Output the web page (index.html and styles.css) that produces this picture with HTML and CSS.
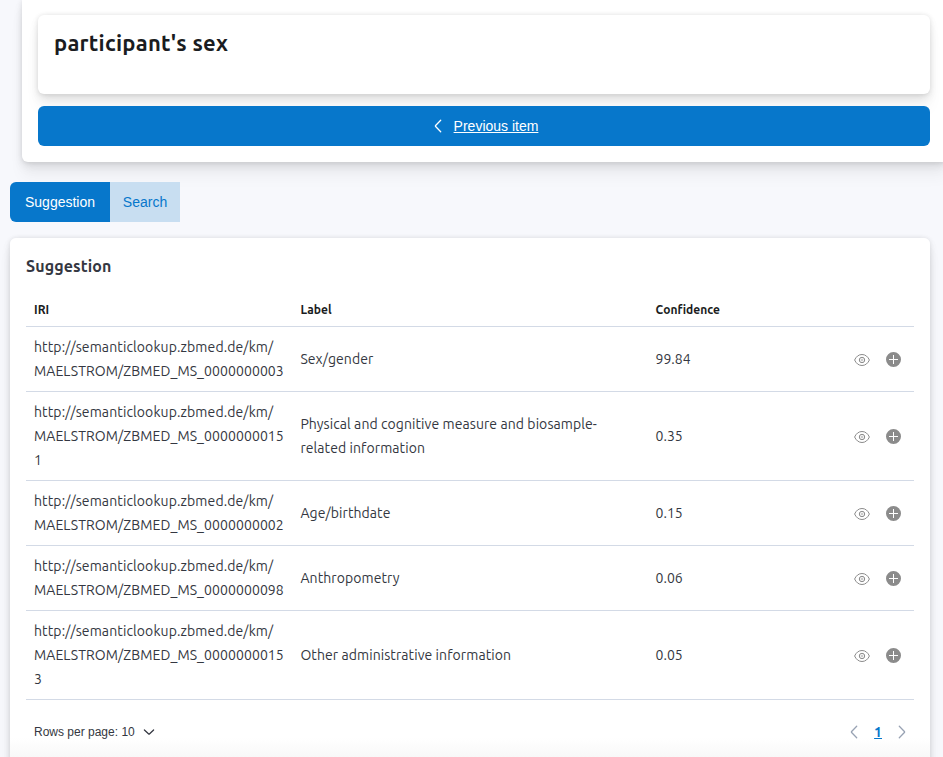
FILE: index.html
```html
<!DOCTYPE html>
<html lang="en">
<head>
<meta charset="utf-8">
<title>Suggestions</title>
<link rel="stylesheet" href="styles.css">
</head>
<body>
<svg class="defs" aria-hidden="true">
  <symbol id="eye" viewBox="0 0 16 16"><path fill="none" stroke="currentColor" d="M.6 8C2.1 4.700 4.600 2.500 8 2.500s5.900 2.200 7.400 5.500c-1.500 3.300-4 5.500-7.400 5.500S2.100 11.300.6 8Z"/><circle cx="8" cy="8" r="2.700" fill="none" stroke="currentColor"/><circle cx="8" cy="8" r="1" fill="none" stroke="currentColor" stroke-width=".5"/></symbol>
  <symbol id="plus" viewBox="0 0 16 16"><path fill="currentColor" fill-rule="evenodd" d="M7.500 0a7.500 7.500 0 1 1 0 15 7.500 7.500 0 0 1 0-15ZM7 3v4H3v1h4v4h1V8h4V7H8V3H7Z"/></symbol>
  <symbol id="left" viewBox="0 0 16 16"><path fill="none" stroke="currentColor" stroke-width="1.300" stroke-linecap="round" stroke-linejoin="round" d="M10.700 2.300 5.600 7.500a.7.7 0 0 0 0 1l5.100 5.200"/></symbol>
  <symbol id="right" viewBox="0 0 16 16"><path fill="none" stroke="currentColor" stroke-width="1.300" stroke-linecap="round" stroke-linejoin="round" d="m5.300 2.300 5.100 5.200a.7.7 0 0 1 0 1l-5.100 5.200"/></symbol>
  <symbol id="down" viewBox="0 0 12 12"><path fill="none" stroke="currentColor" stroke-width="1.250" stroke-linecap="round" stroke-linejoin="round" d="m1.400 4 4.300 4a.5.5 0 0 0 .7 0l4.200-4"/></symbol>
</svg>
<section class="panel item-panel">
  <div class="panel item-card"><h2>participant's sex</h2></div>
  <a class="previous" href="#"><svg class="icon"><use href="#left"/></svg><span>Previous item</span></a>
</section>
<nav class="tabs"><button class="tab active">Suggestion</button><button class="tab">Search</button></nav>
<section class="panel results">
  <h3>Suggestion</h3>
  <table>
    <colgroup><col class="c-iri"><col class="c-label"><col class="c-conf"><col></colgroup>
    <thead><tr><th>IRI</th><th>Label</th><th>Confidence</th><th></th></tr></thead>
    <tbody>
      <tr><td class="iri"><span>http://semanticlookup.zbmed.de/km/</span><br><b>MAELSTROM/ZBMED_MS_0000000003</b></td><td>Sex/gender</td><td class="num">99.84</td><td><div class="actions"><svg class="icon"><use href="#eye"/></svg><svg class="icon"><use href="#plus"/></svg></div></td></tr>
      <tr><td class="iri"><span>http://semanticlookup.zbmed.de/km/</span><br><b>MAELSTROM/ZBMED_MS_0000000015<br>1</b></td><td>Physical and cognitive measure and biosample-<br>related information</td><td class="num">0.35</td><td><div class="actions"><svg class="icon"><use href="#eye"/></svg><svg class="icon"><use href="#plus"/></svg></div></td></tr>
      <tr><td class="iri"><span>http://semanticlookup.zbmed.de/km/</span><br><b>MAELSTROM/ZBMED_MS_0000000002</b></td><td>Age/birthdate</td><td class="num">0.15</td><td><div class="actions"><svg class="icon"><use href="#eye"/></svg><svg class="icon"><use href="#plus"/></svg></div></td></tr>
      <tr><td class="iri"><span>http://semanticlookup.zbmed.de/km/</span><br><b>MAELSTROM/ZBMED_MS_0000000098</b></td><td>Anthropometry</td><td class="num">0.06</td><td><div class="actions"><svg class="icon"><use href="#eye"/></svg><svg class="icon"><use href="#plus"/></svg></div></td></tr>
      <tr><td class="iri"><span>http://semanticlookup.zbmed.de/km/</span><br><b>MAELSTROM/ZBMED_MS_0000000015<br>3</b></td><td>Other administrative information</td><td class="num">0.05</td><td><div class="actions"><svg class="icon"><use href="#eye"/></svg><svg class="icon"><use href="#plus"/></svg></div></td></tr>
    </tbody>
  </table>
  <footer class="pager">
    <div class="rows"><span>Rows per page: 10</span><svg><use href="#down"/></svg></div>
    <div class="pages"><svg class="icon"><use href="#left"/></svg><a href="#">1</a><svg class="icon"><use href="#right"/></svg></div>
  </footer>
</section>
</body>
</html>
```
FILE: styles.css
```css
* { box-sizing: border-box; }
body { margin: 0; height: 757px; overflow: hidden; background: #f7f8fc; color: #343741; font: 14px/24px Ubuntu, "Noto Sans", sans-serif; }
.defs { display: none; }
.icon { width: 16px; height: 16px; flex: none; display: block; }
.panel { background: #fff; border-radius: 6px; box-shadow: 0 .9px 4px rgba(0,0,0,.08), 0 2.600px 8px rgba(0,0,0,.06), 0 5.700px 12px rgba(0,0,0,.05), 0 15px 15px rgba(0,0,0,.04); }
.item-panel { height: 162px; width: 924px; margin-left: 22px; padding: 15px 16px 16px; border-radius: 0 0 0 6px; }
.item-card { width: 892px; height: 79px; padding: 12px 16px; }
h2, h3 { margin: 0; font-weight: 700; }
h2 { font-size: 22px; line-height: 32px; color: #1a1c21; letter-spacing: .23px; }
.previous { width: 892px; height: 40px; margin-top: 12px; border-radius: 6px; background: #0777cb; color: #fff; display: flex; align-items: center; justify-content: center; gap: 8px; font-family: "Liberation Sans", sans-serif; }
.tabs { display: flex; margin: 20px 0 16px 10px; position: relative; }
.tab { height: 40px; width: 70px; padding: 0; border: 0; background: #c8def1; color: #0777cb; font: 14px "Liberation Sans", sans-serif; }
.tab.active { width: 100px; background: #0777cb; color: #fff; border-radius: 6px 0 0 6px; }
.results { position: relative; margin-left: 10px; width: 920px; height: 540px; padding: 16px; background: linear-gradient(#fff 500px, #f8f8f8 519px); }
h3 { font-size: 16px; line-height: 24px; letter-spacing: .1px; }
table { width: 888px; margin-top: 15px; border-collapse: separate; border-spacing: 0; table-layout: fixed; }
.c-iri { width: 266.400px; }
.c-label { width: 355.200px; }
.c-conf { width: 177.600px; }
th, td { padding: 8px; text-align: left; vertical-align: middle; border-bottom: 1px solid #d3dae6; white-space: nowrap; }
th { height: 34px; padding: 0 8px; font-size: 12px; color: #1a1c21; letter-spacing: .04px; }
td { letter-spacing: .08px; }
.iri span { letter-spacing: .11px; }
.num { letter-spacing: 0; }
td b { font-weight: 400; }
.actions { display: flex; justify-content: flex-end; gap: 16px; padding: 2px 4px 0 0; color: #8b8b8b; }
.pager { display: flex; justify-content: space-between; align-items: center; height: 24px; margin-top: 20px; padding: 0 4px 0 8px; }
.rows { display: flex; align-items: center; gap: 8px; font: 12px "Liberation Sans", sans-serif; }
.rows svg { width: 12px; height: 12px; }
.pages { display: flex; align-items: center; gap: 12px; color: #98a2b3; }
.pages a { color: #0777cb; font-weight: 700; }
```
